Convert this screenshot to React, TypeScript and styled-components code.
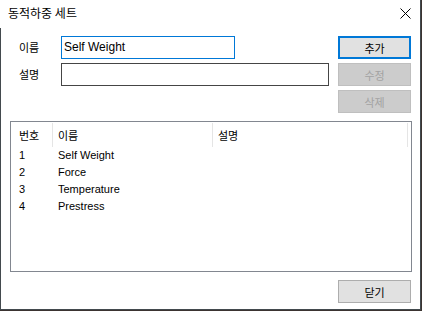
import React from "react";
import styled, { createGlobalStyle } from "styled-components";

const Global = createGlobalStyle`
  html, body { margin: 0; padding: 0; background: #3b3431; }
  body { font-family: "Liberation Sans", "Noto Sans CJK KR", sans-serif; font-size: 11px; color: #000; }
  * { box-sizing: border-box; }
`;

const Window = styled.div`
  width: 421px;
  height: 310px;
  background: #fff;
  border-right: 1px solid #434a4e;
  border-bottom: 1px solid #434a4e;
  display: flex;
  flex-direction: column;
`;

const TitleBar = styled.div`
  height: 28px;
  flex: none;
  display: flex;
  align-items: center;
  justify-content: space-between;
  padding: 0 9px 2px 8px;
`;

const Title = styled.div`
  font-family: "Noto Sans CJK KR", sans-serif;
  font-size: 12px;
  line-height: 16px;
`;

const CloseIcon = styled.svg`
  width: 11px;
  height: 11px;
  margin-top: 1px;
`;

const Body = styled.div`
  flex: 1;
  border-left: 1px solid #434a4e;
  padding: 8px 8px 0 9px;
  display: flex;
  flex-direction: column;
`;

const Top = styled.div`
  display: flex;
  gap: 9px;
  margin-bottom: 8px;
`;

const Form = styled.div`
  display: grid;
  grid-template-columns: 42px auto;
  grid-auto-rows: 23px;
  row-gap: 4px;
  padding-left: 9px;
  align-content: start;
  justify-items: start;
  flex: 1;
`;

const Label = styled.div`
  font-family: "Noto Sans CJK KR", sans-serif;
  font-size: 11px;
  line-height: 23px;
`;

const Input = styled.div<{ $w: number; $focus?: boolean }>`
  width: ${(p) => p.$w}px;
  height: 23px;
  border: 1px solid ${(p) => (p.$focus ? "#0078d7" : "#454545")};
  background: #fff;
  padding: 0 2px;
  line-height: 21px;
  font-size: 12px;
`;

const Buttons = styled.div`
  display: flex;
  flex-direction: column;
  gap: 4px;
  margin-right: 1px;
`;

const Button = styled.div<{ $state?: "default" | "disabled" | "normal" }>`
  width: 73px;
  height: 23px;
  display: flex;
  align-items: center;
  justify-content: center;
  font-family: "Noto Sans CJK KR", sans-serif;
  font-size: 11px;
  background: ${(p) => (p.$state === "disabled" ? "#cccccc" : "#e1e1e1")};
  color: ${(p) => (p.$state === "disabled" ? "#a2a2a2" : "#000")};
  border: ${(p) =>
    p.$state === "default"
      ? "2px solid #0078d7"
      : p.$state === "disabled"
      ? "1px solid #bfbfbf"
      : "1px solid #adadad"};
`;

const List = styled.div`
  height: 151px;
  border: 1px solid #828790;
  background: #fff;
  padding-top: 1px;
`;

const Row = styled.div<{ $header?: boolean }>`
  display: grid;
  grid-template-columns: 42px 160px 195px;
  height: ${(p) => (p.$header ? "24px" : "17px")};
  align-items: center;
`;

const HeadCell = styled.div<{ $first?: boolean }>`
  height: 100%;
  display: flex;
  align-items: center;
  padding-left: ${(p) => (p.$first ? "8px" : "5px")};
  border-right: 1px solid #e5e5e5;
  font-family: "Noto Sans CJK KR", sans-serif;
  font-size: 11px;
  padding-bottom: 1px;
`;

const Cell = styled.div<{ $first?: boolean }>`
  padding-left: ${(p) => (p.$first ? "8px" : "5px")};
  font-size: 11px;
  line-height: 17px;
  white-space: nowrap;
`;

const Footer = styled.div`
  display: flex;
  justify-content: flex-end;
  margin-top: 8px;
  padding-right: 1px;
`;

const items = ["Self Weight", "Force", "Temperature", "Prestress"];

export default function App() {
  return (
    <>
      <Global />
      <Window>
        <TitleBar>
          <Title>동적하중 세트</Title>
          <CloseIcon viewBox="0 0 11 11">
            <path d="M0.5 0.5 L10.5 10.5 M10.5 0.5 L0.5 10.5" stroke="#000" strokeWidth="1" />
          </CloseIcon>
        </TitleBar>
        <Body>
          <Top>
            <Form>
              <Label>이름</Label>
              <Input $w={174} $focus>Self Weight</Input>
              <Label>설명</Label>
              <Input $w={268} />
            </Form>
            <Buttons>
              <Button $state="default">추가</Button>
              <Button $state="disabled">수정</Button>
              <Button $state="disabled">삭제</Button>
            </Buttons>
          </Top>
          <List>
            <Row $header>
              <HeadCell $first>번호</HeadCell>
              <HeadCell>이름</HeadCell>
              <HeadCell>설명</HeadCell>
            </Row>
            {items.map((name, i) => (
              <Row key={name}>
                <Cell $first>{i + 1}</Cell>
                <Cell>{name}</Cell>
                <Cell />
              </Row>
            ))}
          </List>
          <Footer>
            <Button $state="normal">닫기</Button>
          </Footer>
        </Body>
      </Window>
    </>
  );
}
